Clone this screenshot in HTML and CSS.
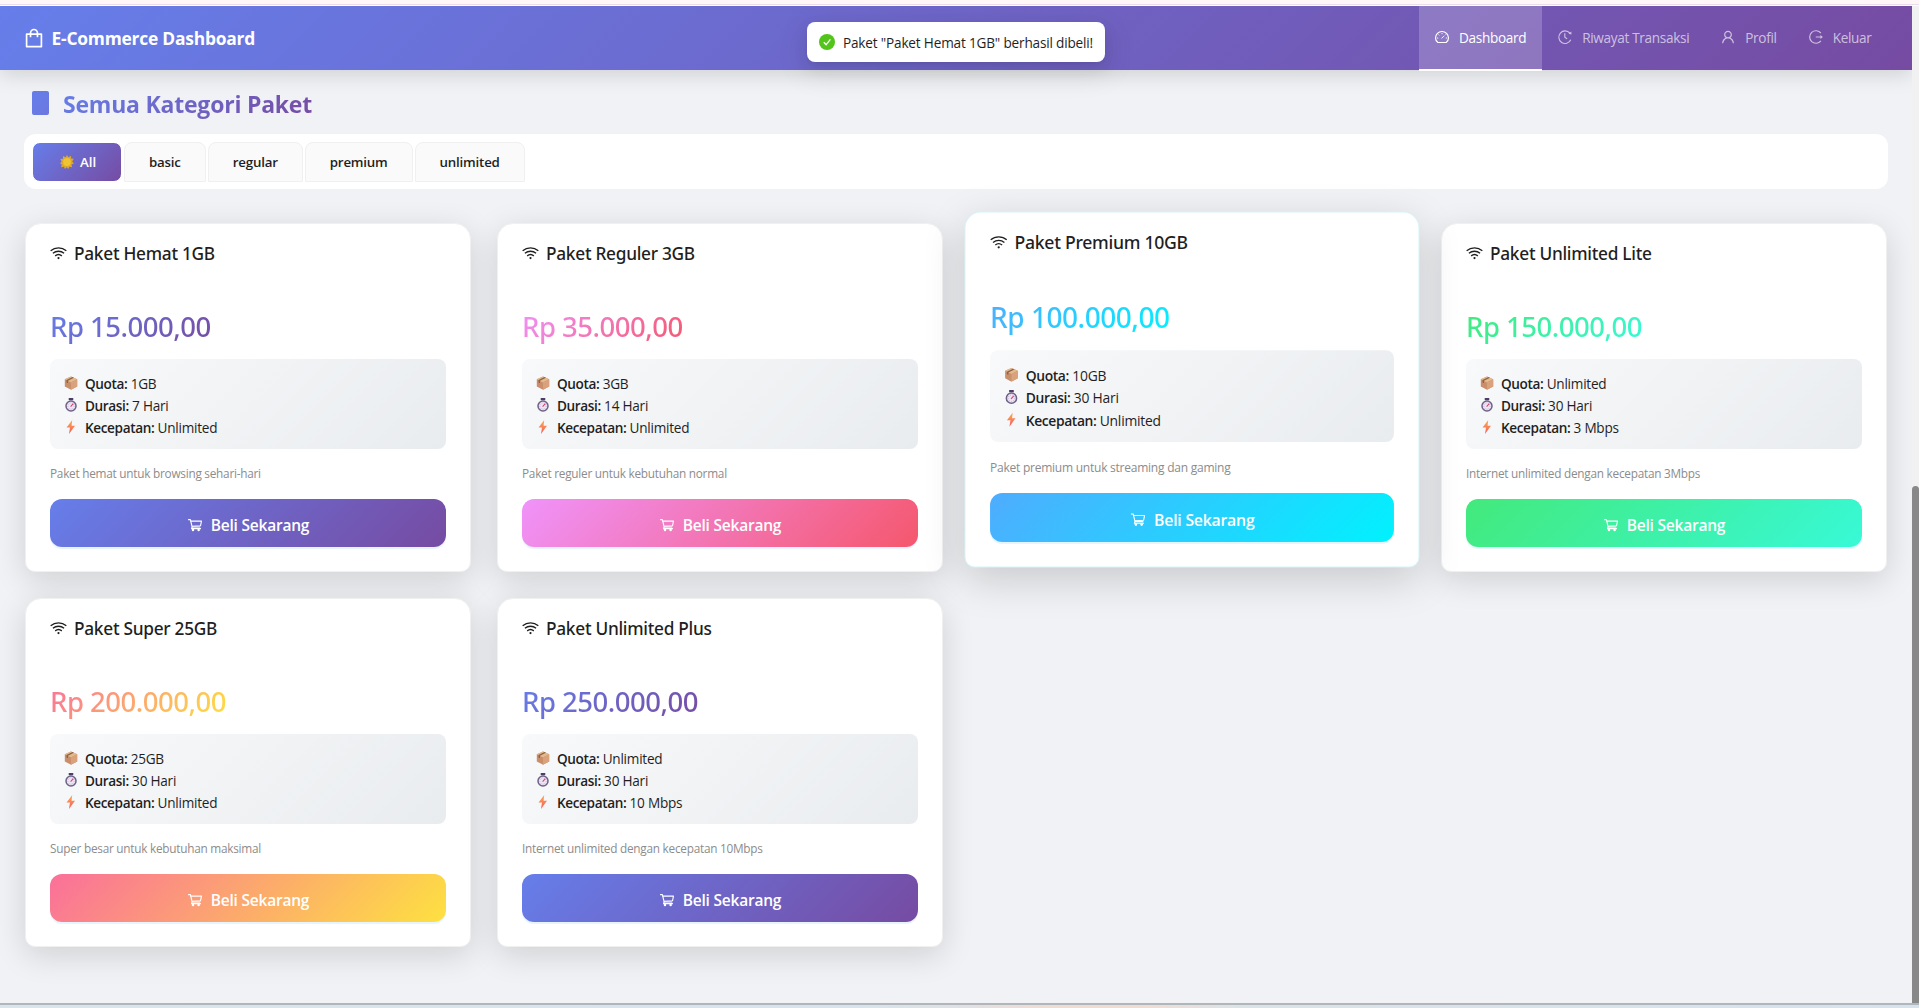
FILE: index.html
```html
<!DOCTYPE html>
<html lang="id">
<head>
<meta charset="utf-8">
<title>E-Commerce Dashboard</title>
<link rel="stylesheet" href="styles.css">
</head>
<body>
<svg width="0" height="0" class="defs" aria-hidden="true">
  <defs>
    <linearGradient id="bolt-fill" x1="0" y1="0" x2="0" y2="1"><stop offset="0" stop-color="#fcb04e"/><stop offset="1" stop-color="#f5585f"/></linearGradient>
    <symbol id="i-bag" viewBox="0 0 1024 1024"><path d="M832 312H696v-16c0-101.6-82.4-184-184-184s-184 82.4-184 184v16H192c-17.7 0-32 14.3-32 32v536c0 17.7 14.3 32 32 32h640c17.7 0 32-14.3 32-32V344c0-17.7-14.3-32-32-32zm-432-16c0-61.9 50.1-112 112-112s112 50.1 112 112v16H400v-16zm392 544H232V384h96v88c0 4.4 3.6 8 8 8h56c4.4 0 8-3.6 8-8v-88h224v88c0 4.4 3.6 8 8 8h56c4.4 0 8-3.6 8-8v-88h96v456z"/></symbol>
    <symbol id="i-dash" viewBox="0 0 1024 1024"><g fill="none" stroke="currentColor" stroke-width="76"><path d="M250 862C150 790 98 690 98 571C98 343 283 158 512 158s414 185 414 413c0 119-52 219-152 291z"/><path d="M512 260v72M286 352l52 52M738 352l-52 52M196 578h74M754 578h74M486 604l150-150" stroke-width="60"/></g></symbol>
    <symbol id="i-history" viewBox="0 0 1024 1024"><g fill="none" stroke="currentColor" stroke-width="72"><path d="M824 268A400 400 0 1 0 880 690"/><path d="M500 270v250l150 112"/></g><path d="M740 300l180 44 0-190z"/></symbol>
    <symbol id="i-user" viewBox="0 0 1024 1024"><path d="M858.5 763.6a374 374 0 00-80.6-119.5 375.63 375.63 0 00-119.5-80.6c-.4-.2-.8-.3-1.2-.5C719.5 518 760 444.7 760 362c0-137-111-248-248-248S264 225 264 362c0 82.7 40.5 156 102.8 201.1-.4.2-.8.3-1.2.5-44.8 18.9-85 46-119.5 80.6a375.63 375.63 0 00-80.6 119.5A371.7 371.7 0 00136 901.8a8 8 0 008 8.2h60c4.4 0 7.9-3.5 8-7.8 2-77.2 33-149.5 87.8-204.3 56.7-56.7 132-87.9 212.2-87.9s155.5 31.2 212.2 87.9C779 752.7 810 825 812 902.2c.1 4.4 3.6 7.8 8 7.8h60a8 8 0 008-8.2c-1-47.8-10.9-94.3-29.5-138.2zM512 534c-45.9 0-89.1-17.9-121.6-50.4S340 407.9 340 362c0-45.9 17.9-89.1 50.4-121.6S466.1 190 512 190s89.1 17.9 121.6 50.4S684 316.1 684 362c0 45.9-17.9 89.1-50.4 121.6S557.9 534 512 534z"/></symbol>
    <symbol id="i-logout" viewBox="0 0 1024 1024"><path d="M826 270A400 400 0 1 0 826 754" fill="none" stroke="currentColor" stroke-width="76"/><path d="M496 474h300v-84l154 122-154 122v-84H496z"/></symbol>
    <symbol id="i-wifi" viewBox="0 0 1024 1024"><g fill="none" stroke="currentColor" stroke-width="78"><path d="M40 345C310 110 714 110 984 345"/><path d="M176 500C370 335 654 335 848 500"/><path d="M312 655C430 560 594 560 712 655"/></g><circle cx="512" cy="790" r="66"/></symbol>
    <symbol id="i-cart" viewBox="0 0 1024 1024"><g fill="none" stroke="currentColor" stroke-width="70" stroke-linejoin="round"><path d="M70 165H215L330 640H850"/><path d="M235 262H925L868 555L318 590"/><path d="M330 640L290 745H890"/></g><circle cx="385" cy="830" r="80"/><circle cx="745" cy="830" r="80"/></symbol>
    <symbol id="i-check" viewBox="0 0 16 16"><circle cx="8" cy="8" r="8" fill="#52c41a"/><path d="M4.8 8.2l2.3 2.5 4.3-5.3" fill="none" stroke="#fff" stroke-width="1.3"/></symbol>
    <symbol id="i-box" viewBox="0 0 14 14"><path d="M7 .4L13.2 3.2V10.4L7 13.8L.8 10.4V3.2z" fill="#c98f6b"/><path d="M7 .4L13.2 3.2L7 6.4L.8 3.2z" fill="#e3b98d"/><path d="M7 6.4L13.2 3.2V10.4L7 13.8z" fill="#d9a27c"/><path d="M9.900 1.800L4 4.800v2.400l-1.500-.8V4.100L8.500 1.100z" fill="#8d6248"/></symbol>
    <symbol id="i-watch" viewBox="0 0 14 14"><rect x="4.700" y="0" width="4.600" height="2.200" rx=".6" fill="#4b3d63"/><circle cx="7" cy="8" r="5" fill="#ece6f4" stroke="#6f6088" stroke-width="1.500"/><circle cx="7" cy="8" r="3.200" fill="none" stroke="#b9adca" stroke-width=".9" stroke-dasharray="1 1.200"/><path d="M6.600 8.600L9.300 5.700" stroke="#e0407b" stroke-width="1.100"/></symbol>
    <symbol id="i-bolt" viewBox="0 0 14 14"><path d="M8.2 0L2.6 7.6H6L5 14L11 5.8H7.6z" fill="url(#bolt-fill)"/></symbol>
    <symbol id="i-star" viewBox="0 0 14 14"><path d="M7 0l1.500 2.200L11 .8l.2 2.800 2.600.2L12.200 6.500 14 8.600l-2.500.8.6 2.800-2.700-.5L8.300 14 6.800 12.200 4.800 14l-.8-2.300-2.800.6.5-2.800L0 8.300 1.600 6.400.2 4l2.700-.3L3 .9l2.600 1.300z" fill="#d9a830"/><circle cx="7" cy="7" r="3.900" fill="#f0c332"/></symbol>
  </defs>
</svg>

<div class="window-top"></div>
<div class="viewport">
  <div class="app">
    <header class="header">
      <div class="brand"><svg class="brand-icon"><use href="#i-bag"/></svg><span>E-Commerce Dashboard</span></div>
      <nav class="nav">
        <a class="nav-item active"><svg><use href="#i-dash"/></svg><span>Dashboard</span></a>
        <a class="nav-item"><svg><use href="#i-history"/></svg><span>Riwayat Transaksi</span></a>
        <a class="nav-item"><svg><use href="#i-user"/></svg><span>Profil</span></a>
        <a class="nav-item"><svg><use href="#i-logout"/></svg><span>Keluar</span></a>
      </nav>
    </header>
    <main class="content">
      <h2 class="page-title"><span class="title-glyph"></span><span class="title-text">Semua Kategori Paket</span></h2>
      <div class="tabs">
        <div class="tab selected"><svg><use href="#i-star"/></svg>All</div>
        <div class="tab">basic</div>
        <div class="tab">regular</div>
        <div class="tab">premium</div>
        <div class="tab">unlimited</div>
      </div>
      <div class="grid">
        <article class="card indigo">
          <h3 class="card-title"><svg><use href="#i-wifi"/></svg>Paket Hemat 1GB</h3>
          <div class="price">Rp 15.000,00</div>
          <ul class="info">
            <li><svg><use href="#i-box"/></svg><b>Quota:</b> 1GB</li>
            <li><svg><use href="#i-watch"/></svg><b>Durasi:</b> 7 Hari</li>
            <li><svg><use href="#i-bolt"/></svg><b>Kecepatan:</b> Unlimited</li>
          </ul>
          <p class="desc">Paket hemat untuk browsing sehari-hari</p>
          <button class="buy"><svg><use href="#i-cart"/></svg>Beli Sekarang</button>
        </article>
        <article class="card pink">
          <h3 class="card-title"><svg><use href="#i-wifi"/></svg>Paket Reguler 3GB</h3>
          <div class="price">Rp 35.000,00</div>
          <ul class="info">
            <li><svg><use href="#i-box"/></svg><b>Quota:</b> 3GB</li>
            <li><svg><use href="#i-watch"/></svg><b>Durasi:</b> 14 Hari</li>
            <li><svg><use href="#i-bolt"/></svg><b>Kecepatan:</b> Unlimited</li>
          </ul>
          <p class="desc">Paket reguler untuk kebutuhan normal</p>
          <button class="buy"><svg><use href="#i-cart"/></svg>Beli Sekarang</button>
        </article>
        <article class="card cyan raised">
          <h3 class="card-title"><svg><use href="#i-wifi"/></svg>Paket Premium 10GB</h3>
          <div class="price">Rp 100.000,00</div>
          <ul class="info">
            <li><svg><use href="#i-box"/></svg><b>Quota:</b> 10GB</li>
            <li><svg><use href="#i-watch"/></svg><b>Durasi:</b> 30 Hari</li>
            <li><svg><use href="#i-bolt"/></svg><b>Kecepatan:</b> Unlimited</li>
          </ul>
          <p class="desc">Paket premium untuk streaming dan gaming</p>
          <button class="buy"><svg><use href="#i-cart"/></svg>Beli Sekarang</button>
        </article>
        <article class="card green">
          <h3 class="card-title"><svg><use href="#i-wifi"/></svg>Paket Unlimited Lite</h3>
          <div class="price">Rp 150.000,00</div>
          <ul class="info">
            <li><svg><use href="#i-box"/></svg><b>Quota:</b> Unlimited</li>
            <li><svg><use href="#i-watch"/></svg><b>Durasi:</b> 30 Hari</li>
            <li><svg><use href="#i-bolt"/></svg><b>Kecepatan:</b> 3 Mbps</li>
          </ul>
          <p class="desc">Internet unlimited dengan kecepatan 3Mbps</p>
          <button class="buy"><svg><use href="#i-cart"/></svg>Beli Sekarang</button>
        </article>
        <article class="card sunset">
          <h3 class="card-title"><svg><use href="#i-wifi"/></svg>Paket Super 25GB</h3>
          <div class="price">Rp 200.000,00</div>
          <ul class="info">
            <li><svg><use href="#i-box"/></svg><b>Quota:</b> 25GB</li>
            <li><svg><use href="#i-watch"/></svg><b>Durasi:</b> 30 Hari</li>
            <li><svg><use href="#i-bolt"/></svg><b>Kecepatan:</b> Unlimited</li>
          </ul>
          <p class="desc">Super besar untuk kebutuhan maksimal</p>
          <button class="buy"><svg><use href="#i-cart"/></svg>Beli Sekarang</button>
        </article>
        <article class="card indigo">
          <h3 class="card-title"><svg><use href="#i-wifi"/></svg>Paket Unlimited Plus</h3>
          <div class="price">Rp 250.000,00</div>
          <ul class="info">
            <li><svg><use href="#i-box"/></svg><b>Quota:</b> Unlimited</li>
            <li><svg><use href="#i-watch"/></svg><b>Durasi:</b> 30 Hari</li>
            <li><svg><use href="#i-bolt"/></svg><b>Kecepatan:</b> 10 Mbps</li>
          </ul>
          <p class="desc">Internet unlimited dengan kecepatan 10Mbps</p>
          <button class="buy"><svg><use href="#i-cart"/></svg>Beli Sekarang</button>
        </article>
      </div>
    </main>
    <div class="toast"><svg><use href="#i-check"/></svg><span>Paket "Paket Hemat 1GB" berhasil dibeli!</span></div>
  </div>
  <div class="scrollbar"><div class="thumb"></div></div>
</div>
<div class="window-bottom"></div>
</body>
</html>
```
FILE: styles.css
```css
* { box-sizing: border-box; }

body {
  margin: 0;
  width: 1919px;
  height: 1008px;
  overflow: hidden;
  display: flex;
  flex-direction: column;
  background: #f0f2f5;
  color: #1f1f1f;
  font-family: "Open Sans", "Noto Sans", sans-serif;
  font-size: 14px;
}

svg { fill: currentColor; flex: none; display: block; }
.defs { position: absolute; }

.window-top {
  height: 6px;
  flex: none;
  background: linear-gradient(#fff6f8 0 4px, #eadcec 4px 5px, #fff 5px);
}

.window-bottom {
  height: 5px;
  flex: none;
  border-top: 2px solid #b0b6ba;
  background: linear-gradient(90deg, #dae5eb 0, #d8e4ec 860px, #dfe1e5 950px, #f1dcd3 1060px, #f1dcd3 1140px, #dbe3e8 1240px, #d6e3ed 100%);
}

.viewport { flex: 1; min-height: 0; display: flex; }

.app { position: relative; width: 1912px; overflow: hidden; }

.scrollbar {
  flex: 1;
  display: flex;
  flex-direction: column;
  justify-content: flex-end;
  background: #f1f1f1;
}
.thumb { height: 517px; background: #888; border-radius: 4px 4px 0 0; }

/* Header */
.header {
  position: relative;
  height: 64px;
  padding: 0 24.5px 0 22px;
  display: flex;
  justify-content: space-between;
  background: linear-gradient(135deg, #667eea 0%, #764ba2 100%);
  box-shadow: 0 4px 20px rgba(0, 0, 0, .15);
}
.brand {
  display: flex;
  align-items: center;
  gap: 5.5px;
  color: #fff;
  font-size: 17.4px;
  font-weight: 700;
  letter-spacing: -.22px;
}
.brand-icon { width: 24px; height: 24px; }
.nav { display: flex; height: 65px; color: rgba(255, 255, 255, .65); }
.nav-item {
  display: flex;
  align-items: center;
  gap: 9px;
  padding: 0 16px 3px 15px;
  font-size: 13.6px;
  letter-spacing: -.33px;
}
.nav-item svg { width: 16px; height: 16px; }
.nav-item.active {
  color: #fff;
  background: rgba(255, 255, 255, .2);
  border-bottom: 2px solid #fff;
  padding-bottom: 1px;
}

/* Page heading and tabs */
.content { padding: 18px 24px 0 24px; }
.page-title {
  margin: 0;
  height: 32px;
  display: flex;
  align-items: center;
  gap: 14px;
  padding-left: 8px;
  font-size: 23px;
  font-weight: 700;
  letter-spacing: -.22px;
}
.title-glyph { width: 17px; height: 24px; margin-top: -2px; border-radius: 2px; background: linear-gradient(135deg, #667eea, #6b77e0); }
.title-text {
  margin-top: -1px;
  background: linear-gradient(135deg, #667eea 0%, #764ba2 100%);
  -webkit-background-clip: text;
  background-clip: text;
  color: transparent;
}
.tabs {
  height: 55px;
  margin-top: 14px;
  padding: 8px;
  display: flex;
  gap: 2px;
  background: #fff;
  border-radius: 12px;
}
.tab {
  height: 40px;
  display: flex;
  align-items: center;
  padding: 0 24px 1px;
  border: 1px solid #f0f0f0;
  border-radius: 8px 8px 0 0;
  background: #fafafa;
  font-size: 13.3px;
  font-weight: 600;
  letter-spacing: -.2px;
}
.tab svg { width: 14px; height: 14px; }
.tab.selected {
  width: 90px;
  gap: 6px;
  padding: 0 0 0 27px;
  color: #fff;
  border: 1px solid #fff;
  border-radius: 8px;
  background: linear-gradient(135deg, #667eea 0%, #764ba2 100%) border-box;
  letter-spacing: 0;
}

/* Package cards */
.grid {
  margin-top: 34px;
  padding-left: 1px;
  display: grid;
  grid-template-columns: repeat(4, 446px);
  grid-auto-rows: 349px;
  gap: 26px;
}
.card {
  padding: 17px 24px 0;
  display: flex;
  flex-direction: column;
  background: #fff;
  border: 1px solid #f0f0f0;
  border-radius: 16px 16px 10px 10px;
  box-shadow: 0 8px 32px rgba(0, 0, 0, .14);
}
.raised {
  transform: translateY(-8px) scale(1.02);
  border-color: #d8f4fa;
  box-shadow: 0 12px 40px rgba(0, 0, 0, .17);
}
.indigo { --accent: linear-gradient(135deg, #667eea 0%, #764ba2 100%); }
.pink { --accent: linear-gradient(135deg, #f093fb 0%, #f5576c 100%); }
.cyan { --accent: linear-gradient(135deg, #4facfe 0%, #00f2fe 100%); }
.green { --accent: linear-gradient(135deg, #43e97b 0%, #38f9d7 100%); }
.sunset { --accent: linear-gradient(135deg, #fa709a 0%, #fee140 100%); }

.card-title {
  margin: 0;
  height: 24px;
  display: flex;
  align-items: center;
  gap: 7px;
  font: 500 17.3px "Noto Sans", sans-serif;
  letter-spacing: -.28px;
}
.card-title svg { width: 17px; height: 17px; }
.price {
  align-self: flex-start;
  margin-top: 41px;
  height: 40px;
  font: 500 27.5px/41px "Noto Sans", sans-serif;
  letter-spacing: -.5px;
  background: var(--accent);
  -webkit-background-clip: text;
  background-clip: text;
  color: transparent;
}
.info {
  list-style: none;
  margin: 13px 0 0;
  padding: 13px 14px;
  height: 90px;
  border-radius: 8px;
  background: linear-gradient(135deg, #f8f9fa 0%, #e9ecef 100%);
  font-size: 13.6px;
  letter-spacing: -.24px;
}
.info li { display: flex; align-items: center; height: 22px; white-space: pre; }
.info svg { width: 14px; height: 14px; margin-right: 7px; }
.info b { font-weight: 600; letter-spacing: -.38px; }
.desc {
  margin: 15px 0 0;
  height: 18px;
  line-height: 18px;
  font-size: 11.8px;
  letter-spacing: -.25px;
  color: #8c8c8c;
}
.buy {
  flex: none;
  margin-top: 17px;
  height: 48px;
  padding: 3px 0 0;
  display: flex;
  align-items: center;
  justify-content: center;
  gap: 8px;
  border: 0;
  border-radius: 12px;
  background: var(--accent);
  box-shadow: 0 2px 0 rgba(5, 145, 255, .1);
  color: #fff;
  font: 600 15.5px "Open Sans", sans-serif;
  letter-spacing: -.22px;
}
.buy svg { width: 16px; height: 16px; }

/* Purchase notification floating over the header */
.toast {
  position: absolute;
  top: 16px;
  left: 807px;
  width: 298px;
  height: 40px;
  padding: 0 12px;
  display: flex;
  align-items: center;
  gap: 8px;
  background: #fff;
  border-radius: 8px;
  box-shadow: 0 6px 16px rgba(0, 0, 0, .08), 0 3px 6px -4px rgba(0, 0, 0, .12), 0 9px 28px 8px rgba(0, 0, 0, .05);
  font-size: 13.6px;
  letter-spacing: -.18px;
  white-space: nowrap;
}
.toast svg { width: 16px; height: 16px; }
```
